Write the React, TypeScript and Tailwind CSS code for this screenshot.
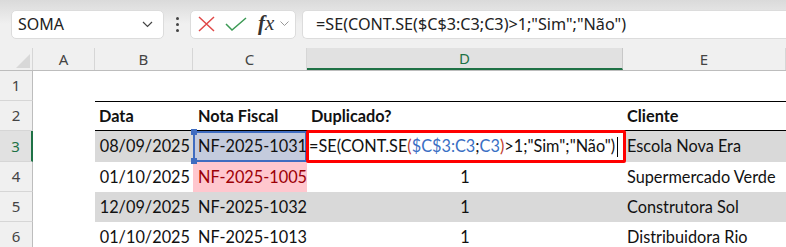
import React from 'react';

const cols = [
  { key: 'A', w: 'w-[62px]' },
  { key: 'B', w: 'w-[98px]' },
  { key: 'C', w: 'w-[114px]' },
  { key: 'D', w: 'w-[316px]' },
  { key: 'E', w: 'flex-1' },
];

const rows = [
  { date: '01/10/2025', nf: 'NF-2025-1005', dup: '1', client: 'Supermercado Verde', band: false, dupNf: true },
  { date: '12/09/2025', nf: 'NF-2025-1032', dup: '1', client: 'Construtora Sol', band: true, dupNf: false },
  { date: '01/10/2025', nf: 'NF-2025-1013', dup: '1', client: 'Distribuidora Rio', band: false, dupNf: false },
];

const cellFont = "font-['Lato',sans-serif] text-[16.3px] text-[#111] whitespace-nowrap";
const uiFont = "font-['Noto_Sans','Open_Sans',sans-serif]";

const RowHeader = ({ n, active }: { n: number; active?: boolean }) => (
  <div
    className={`w-[33px] shrink-0 flex items-center justify-center border-b border-[#d6d6d6] text-[15px] ${uiFont} ${
      active ? 'bg-[#e1e1e1] text-[#1e7145] border-r-2 border-r-[#1e7145]' : 'bg-[#f0f0f0] text-[#444] border-r border-r-[#bdbdbd]'
    }`}
  >
    {n}
  </div>
);

const FormulaText = () => (
  <>
    =SE(CONT.SE<span className="text-[#c0392b]">(</span>
    <span className="text-[#3a6fc4]">$C$3:C3</span>;<span className="text-[#3a6fc4]">C3</span>
    <span className="text-[#c0392b]">)</span>&gt;1;"Sim";"Não")
  </>
);

export default function App() {
  return (
    <div className="w-[786px] h-[247px] overflow-hidden bg-white">
      {/* formula bar */}
      <div className="h-[48px] bg-[#f0f0f0] bg-gradient-to-b from-[#dadada] via-[#f0f0f0] to-[#f0f0f0] flex items-center pl-[11px] gap-0">
        <div className="w-[153px] h-[29px] bg-white rounded-[5px] border border-[#dcdcdc] flex items-center justify-between pl-[6px] pr-[10px]">
          <span className={`${uiFont} text-[16px] text-[#222]`}>SOMA</span>
          <svg width="11" height="7" viewBox="0 0 11 7">
            <path d="M1 1 L5.5 5.5 L10 1" fill="none" stroke="#444" strokeWidth="1.2" />
          </svg>
        </div>
        <div className="w-[26px] flex flex-col items-center gap-[3px]">
          <span className="w-[3px] h-[3px] bg-[#444] rounded-full" />
          <span className="w-[3px] h-[3px] bg-[#444] rounded-full" />
          <span className="w-[3px] h-[3px] bg-[#444] rounded-full" />
        </div>
        <div className="w-[106px] h-[29px] bg-white rounded-[5px] border border-[#dcdcdc] flex items-center pl-[7px]">
          <svg width="17" height="16" viewBox="0 0 17 16">
            <path d="M1 1 L16 15 M16 1 L1 15" stroke="#e04848" strokeWidth="1.5" fill="none" />
          </svg>
          <svg width="22" height="14" viewBox="0 0 22 14" className="ml-[10px]">
            <path d="M1 7 L7 13 L21 1" stroke="#3c9a55" strokeWidth="1.5" fill="none" />
          </svg>
          <span className="ml-[11px] font-['Liberation_Serif',serif] italic text-[21px] leading-none text-[#333] pb-[2px]">
            <span className="font-bold">f</span>x
          </span>
          <svg width="9" height="6" viewBox="0 0 9 6" className="ml-[6px]">
            <path d="M0.5 0.5 L4.5 4.5 L8.5 0.5" stroke="#999" strokeWidth="1" fill="none" />
          </svg>
        </div>
        <div className="ml-[6px] flex-1 h-[29px] bg-white rounded-l-[5px] border border-r-0 border-[#dcdcdc] flex items-center pl-[13px]">
          <span className={`${uiFont} text-[16.2px] text-[#222] whitespace-nowrap`}>=SE(CONT.SE($C$3:C3;C3)&gt;1;"Sim";"Não")</span>
        </div>
      </div>

      {/* column headers */}
      <div className="h-[23px] flex bg-[#f0f0f0] border-b border-[#bdbdbd]">
        <div className="w-[33px] shrink-0 border-r border-[#d6d6d6] flex items-end justify-end p-[2px]">
          <svg width="14" height="14" viewBox="0 0 14 14">
            <path d="M14 0 L14 14 L0 14 Z" fill="#d8d8d8" />
          </svg>
        </div>
        {cols.map((c) => (
          <div
            key={c.key}
            className={`${c.w} shrink-0 flex items-center justify-center text-[15px] ${uiFont} ${
              c.key === 'D'
                ? 'bg-[#e1e1e1] border-b-2 border-[#1e7145] text-[#1e7145] border-r border-r-[#c8c8c8]'
                : 'text-[#444] border-r border-[#d6d6d6]'
            }`}
          >
            {c.key}
          </div>
        ))}
      </div>

      {/* row 1 */}
      <div className="h-[30px] flex">
        <RowHeader n={1} />
        <div className="flex-1" />
      </div>

      {/* row 2 - table header */}
      <div className="h-[30px] flex">
        <RowHeader n={2} />
        <div className="w-[62px] shrink-0" />
        <div className={`flex-1 flex border-t border-b border-black font-bold ${cellFont}`}>
          <div className="w-[98px] shrink-0 flex items-center pl-[4px]">Data</div>
          <div className="w-[114px] shrink-0 flex items-center pl-[5px]">Nota Fiscal</div>
          <div className="w-[316px] shrink-0 flex items-center pl-[4px]">Duplicado?</div>
          <div className="flex-1 flex items-center pl-[4px]">Cliente</div>
        </div>
      </div>

      {/* row 3 - active row */}
      <div className="h-[31px] flex">
        <RowHeader n={3} active />
        <div className="w-[62px] shrink-0" />
        <div className={`flex-1 flex bg-[#d9d9d9] ${cellFont}`}>
          <div className="w-[98px] shrink-0 flex items-center justify-end pr-[3px]">08/09/2025</div>
          <div className="relative w-[114px] shrink-0 flex items-center pl-[3px] bg-[#c4cbdd] border-2 border-[#3f6cc0]">
            NF-2025-1031
            <span className="absolute -left-[4px] -top-[4px] w-[6px] h-[6px] bg-[#3f6cc0]" />
            <span className="absolute -left-[4px] -bottom-[4px] w-[6px] h-[6px] bg-[#3f6cc0]" />
          </div>
          <div className="relative w-[316px] shrink-0 flex items-center pl-[2px] bg-white">
            <div className="absolute -left-[1px] -top-[1px] -right-[3px] -bottom-[1px] border-[3px] border-[#ff0000] rounded-[2px]" />
            <span className="whitespace-nowrap text-[#111]">
              <FormulaText />
            </span>
            <span className="ml-[2px] w-[1px] h-[20px] bg-black" />
          </div>
          <div className="flex-1 flex items-center pl-[4px]">Escola Nova Era</div>
        </div>
      </div>

      {rows.map((r, i) => (
        <div key={i} className="h-[30px] flex">
          <RowHeader n={i + 4} />
          <div className="w-[62px] shrink-0" />
          <div className={`flex-1 flex ${r.band ? 'bg-[#d9d9d9]' : ''} ${cellFont}`}>
            <div className="w-[98px] shrink-0 flex items-center justify-end pr-[3px]">{r.date}</div>
            <div
              className={`w-[114px] shrink-0 flex items-center pl-[5px] ${
                r.dupNf ? 'bg-[#ffc7ce] text-[#9c0006]' : ''
              }`}
            >
              {r.nf}
            </div>
            <div className="w-[316px] shrink-0 flex items-center justify-center">{r.dup}</div>
            <div className="flex-1 flex items-center pl-[4px]">{r.client}</div>
          </div>
        </div>
      ))}
    </div>
  );
}
